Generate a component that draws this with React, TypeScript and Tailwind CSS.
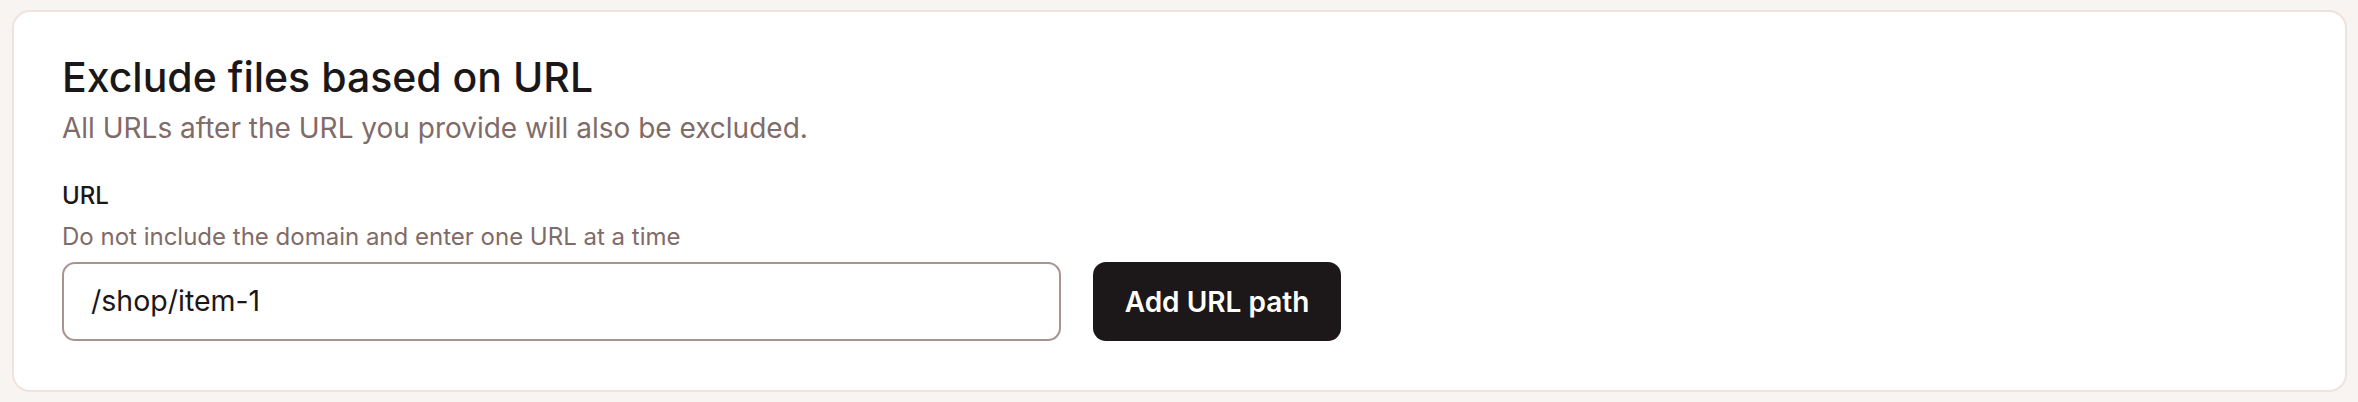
import React from "react";

export default function App() {
  return (
    <div
      className="w-[2358px] h-[402px] bg-[#f8f4f2] pl-3 pr-[11px] pt-[10px] pb-[10px]"
      style={{ fontFamily: "Inter, 'Noto Sans', sans-serif" }}
    >
      <div className="h-full rounded-[18px] border-2 border-[#efe3de] bg-white p-[48px]">
        <h2 className="text-[41px] leading-[35px] font-medium text-[#1b1718]">
          Exclude files based on URL
        </h2>
        <p className="mt-[13px] text-[28px] leading-[40px] text-[#7f6b68]">
          All URLs after the URL you provide will also be excluded.
        </p>
        <div className="mt-[32px] text-[24px] leading-[32px] font-medium text-[#1b1718]">URL</div>
        <div className="mt-[9px] text-[24px] leading-[32px] text-[#7f6b68]">
          Do not include the domain and enter one URL at a time
        </div>
        <div className="mt-[9px] flex items-center gap-[32px]">
          <div className="w-[999px] h-[79px] rounded-[13px] border-2 border-[#a8948f] flex items-center pl-[27px]">
            <span className="text-[28.5px] text-[#1b1718]">/shop/item-1</span>
          </div>
          <button className="w-[248px] h-[79px] rounded-[13px] bg-[#1c1819] text-white text-[28px] font-semibold">
            Add URL path
          </button>
        </div>
      </div>
    </div>
  );
}
